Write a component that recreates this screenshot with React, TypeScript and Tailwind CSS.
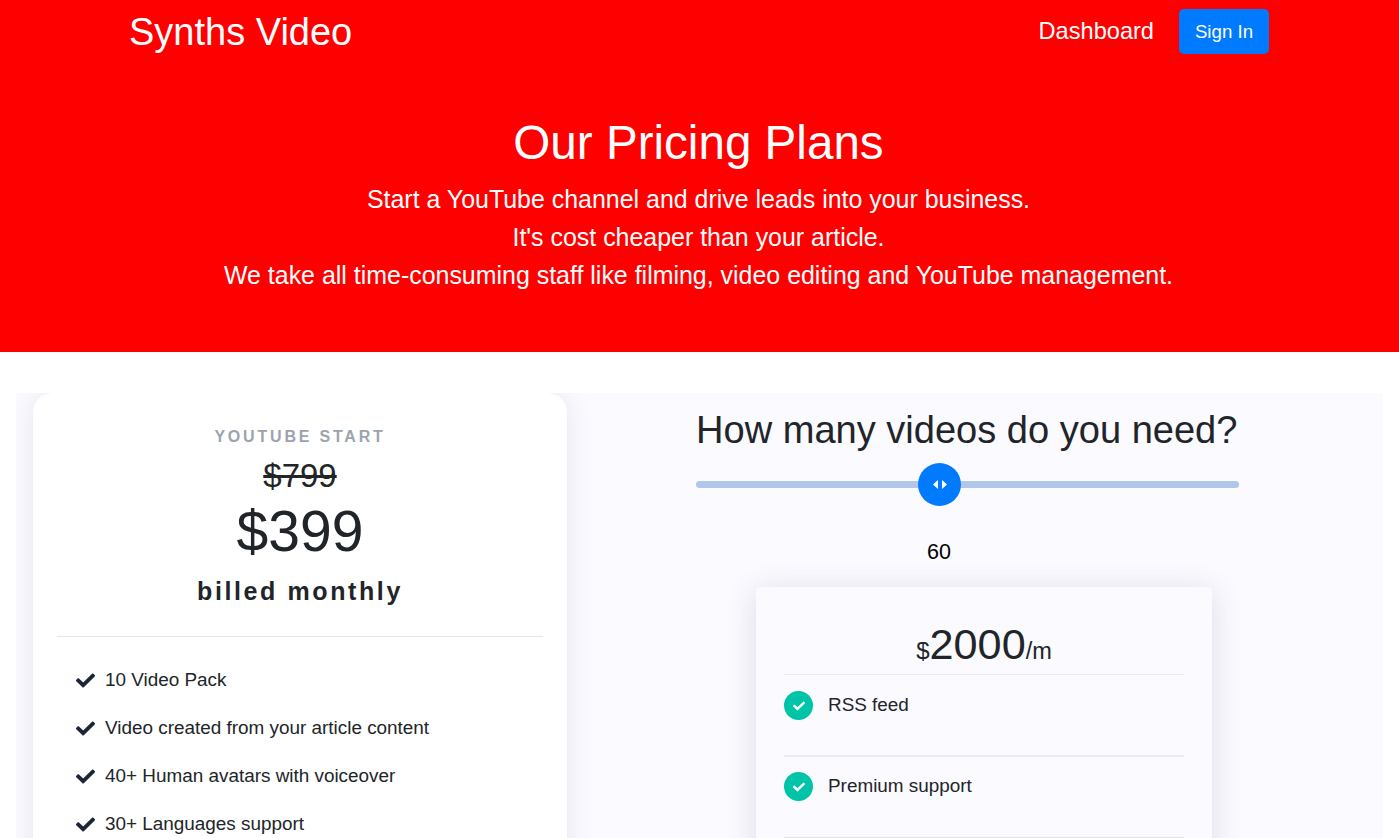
import { FaCheck } from "react-icons/fa";

const startFeatures = [
  "10 Video Pack",
  "Video created from your article content",
  "40+ Human avatars with voiceover",
  "30+ Languages support",
];

export default function App() {
  return (
    <div className="h-[838px] overflow-hidden bg-white font-['Liberation_Sans',Arial,sans-serif] text-[#212529]">
      <header className="h-[352px] bg-[#ff0000] text-white">
        <nav className="flex h-[64px] items-start pl-[129px] pr-[130px]">
          <a className="text-[38px] leading-[64px]">Synths Video</a>
          <a className="ml-auto text-[23.6px] leading-[62px]">Dashboard</a>
          <button
            type="button"
            className="ml-[25px] mt-[9px] h-[45px] w-[90px] rounded-[5px] bg-[#007bff] text-[18.7px] leading-[30px] text-white"
          >
            Sign In
          </button>
        </nav>
        <div className="pr-[2px] pt-[42px] text-center">
          <h1 className="text-[47.6px] leading-[74px]">Our Pricing Plans</h1>
          <p className="text-[24.95px] leading-[38px]">
            Start a YouTube channel and drive leads into your business.
          </p>
          <p className="text-[24.95px] leading-[38px]">
            It's cost cheaper than your article.
          </p>
          <p className="text-[24.95px] leading-[38px]">
            We take all time-consuming staff like filming, video editing and YouTube management.
          </p>
        </div>
      </header>

      <section className="mx-4 mt-[41px] flex h-[600px] overflow-hidden bg-[#fbfaff]">
        <div className="ml-[17px] h-[600px] w-[534px] rounded-[20px] bg-white pt-[32px] shadow-[0_0_28px_rgba(60,60,120,0.1)]">
          <div className="text-center">
            <h3 className="text-[16px] font-bold uppercase leading-[24px] tracking-[2.8px] text-[#9ca3af]">
              YouTube Start
            </h3>
            <p className="mt-[7px] text-[33px] leading-[40px] line-through">$799</p>
            <p className="text-[57px] leading-[70px]">$399</p>
            <p className="mt-[7px] text-[25px] font-bold leading-[36px] tracking-[2.6px]">
              billed monthly
            </p>
          </div>
          <div className="mx-[24px] mt-[27px] border-t border-[#e5e7eb]" />
          <ul className="mt-[19px] pl-[43px]">
            {startFeatures.map((item) => (
              <li key={item} className="flex h-[48px] items-center text-[18.9px]">
                <FaCheck className="mr-[10px] h-[19px] w-[19px] text-[#1a2636]" />
                {item}
              </li>
            ))}
          </ul>
        </div>

        <div className="ml-[129px] w-[543px]">
          <h2 className="text-[38.05px] leading-[75px]">How many videos do you need?</h2>
          <div className="relative mt-[13px] h-[7px] rounded-full bg-[#b0c7ea]">
            <div className="absolute left-[222px] top-[-18px] flex h-[43px] w-[43px] items-center justify-center gap-[4px] rounded-full bg-[#007bff]">
              <svg width="5" height="9" viewBox="0 0 5 9" fill="#fff">
                <path d="M5 0v9L0 4.5z" />
              </svg>
              <svg width="5" height="9" viewBox="0 0 5 9" fill="#fff">
                <path d="M0 0v9l5-4.5z" />
              </svg>
            </div>
          </div>
          <div className="mt-[48px] w-[486px] text-center text-[21.5px] leading-[32px] text-black">60</div>

          <div className="ml-[60px] mt-[19px] h-[400px] w-[456px] rounded-[4px] bg-[#fbfaff] px-[28px] shadow-[0_4px_30px_rgba(60,60,120,0.16)]">
            <div className="flex h-[87px] items-baseline justify-center pt-[27px]">
              <span className="text-[24px]">$</span>
              <span className="text-[43.2px] leading-[60px]">2000</span>
              <span className="text-[23.5px]">/m</span>
            </div>
            <div className="flex h-[81px] items-start border-t border-[#eaeaf6] pt-[16px]">
              <span className="flex h-[29px] w-[29px] items-center justify-center rounded-full bg-[#00c4a7] text-white">
                <FaCheck className="h-[12px] w-[12px]" />
              </span>
              <span className="ml-[15px] text-[18.9px] leading-[27px]">RSS feed</span>
            </div>
            <div className="flex h-[82px] items-start border-t-2 border-[#eaeaf6] pt-[15px]">
              <span className="flex h-[29px] w-[29px] items-center justify-center rounded-full bg-[#00c4a7] text-white">
                <FaCheck className="h-[12px] w-[12px]" />
              </span>
              <span className="ml-[15px] text-[18.9px] leading-[27px]">Premium support</span>
            </div>
            <div className="border-t border-[#e2e2ee]" />
          </div>
        </div>
      </section>
    </div>
  );
}
